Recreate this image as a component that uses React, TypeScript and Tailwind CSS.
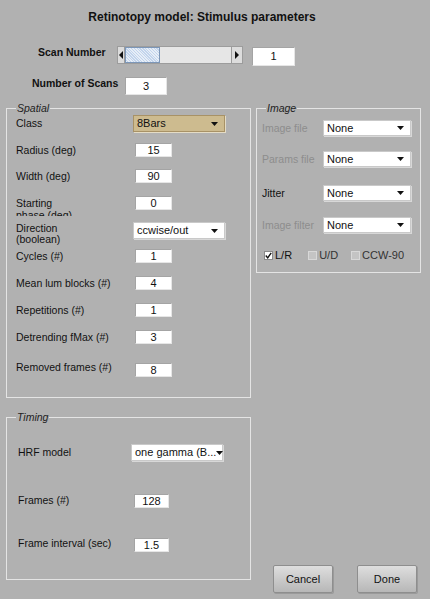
import React from "react";

const FONT = { fontFamily: '"Liberation Sans", Arial, sans-serif' };

function Tri() {
  return (
    <svg width="7" height="4" viewBox="0 0 7 4" className="shrink-0">
      <polygon points="0,0 7,0 3.5,4" fill="#111" />
    </svg>
  );
}

function Drop({ value, w, h = 17, tan = false, cls = "" }: { value: string; w: number; h?: number; tan?: boolean; cls?: string }) {
  return (
    <div
      className={
        "flex items-center justify-between pl-[3px] pr-[6px] text-[11px] text-[#111] border " +
        (tan
          ? "bg-[#cdbb8f] border-[#a89266] shadow-[1px_1px_0_#e4dcc6]"
          : "bg-white border-[#c9c9c9] shadow-[1px_1px_0_#d8d8d8]") +
        " " +
        cls
      }
      style={{ width: w, height: h }}
    >
      <span className="leading-none whitespace-nowrap">{value}</span>
      <Tri />
    </div>
  );
}

function Box({ value, w = 37, h = 14, cls = "" }: { value: string; w?: number; h?: number; cls?: string }) {
  return (
    <div
      className={"flex items-center justify-center bg-white border border-[#a4a4a4] border-r-[#e6e6e6] border-b-[#e6e6e6] text-[11px] text-[#111] leading-none " + cls}
      style={{ width: w, height: h }}
    >
      {value}
    </div>
  );
}

function Row({ label, children, mt }: { label: string; children: React.ReactNode; mt: number }) {
  return (
    <div className="flex items-center" style={{ marginTop: mt }}>
      <div className="w-[119px] text-[10.5px] text-[#111] leading-none whitespace-nowrap">{label}</div>
      {children}
    </div>
  );
}

function Legend({ text }: { text: string }) {
  return (
    <span className="absolute left-[9px] top-[-8px] px-[1px] bg-[#b1b1b1] italic text-[10.5px] text-[#222] leading-[14px]">
      {text}
    </span>
  );
}

function Check({ label, checked, gap }: { label: string; checked?: boolean; gap: number }) {
  return (
    <div className="flex items-center" style={{ marginLeft: gap }}>
      <div
        className={
          "w-[9px] h-[9px] border flex items-center justify-center " +
          (checked ? "bg-white border-[#8a8a8a]" : "bg-[#c4c4c4] border-[#d8d8d8]")
        }
      >
        {checked && (
          <svg width="9" height="9" viewBox="0 0 9 9">
            <path d="M1 4.5 L3.5 7.5 L8 1" stroke="#111" strokeWidth="1.8" fill="none" />
          </svg>
        )}
      </div>
      <span className={"ml-[2px] text-[11px] leading-none " + (checked ? "text-[#111]" : "text-[#333]")}>{label}</span>
    </div>
  );
}

function Button({ text }: { text: string }) {
  return (
    <div className="w-[60px] h-[28px] flex items-center justify-center text-[11px] text-[#111] border border-[#8e8e8e] rounded-[2px] bg-gradient-to-b from-[#dedede] to-[#b7b7b7] shadow-[1px_1px_0_#9a9a9a]">
      {text}
    </div>
  );
}

export default function App() {
  return (
    <div className="w-[430px] h-[599px] bg-[#b1b1b1] overflow-hidden relative" style={FONT}>
      <div className="h-[32px] flex items-center justify-center pt-[1px] pr-[26px]">
        <span className="font-bold text-[12px] text-[#111]">Retinotopy model: Stimulus parameters</span>
      </div>

      {/* Scan number row */}
      <div className="flex items-start mt-[14px]">
        <div className="w-[117px] pl-[38px] font-bold text-[10.5px] text-[#111] leading-none pt-[1px] whitespace-nowrap">Scan Number</div>
        <div className="flex h-[18px] w-[126px] border border-[#9c9c9c]">
          <div className="w-[7px] bg-[#dcdcdc] flex items-center justify-center border-r border-[#9c9c9c]">
            <svg width="4" height="8" viewBox="0 0 4 8"><polygon points="4,0 4,8 0,4" fill="#111" /></svg>
          </div>
          <div className="flex-1 bg-[#e6e6e6] flex">
            <div
              className="w-[35px] h-full border border-[#7d97b8] bg-[#c2d4ec]"
              style={{
                backgroundImage:
                  "repeating-linear-gradient(45deg, rgba(255,255,255,0.6) 0 1px, transparent 1px 2px)",
              }}
            />
          </div>
          <div className="w-[11px] bg-[#dcdcdc] flex items-center justify-center border-l border-[#9c9c9c]">
            <svg width="4" height="8" viewBox="0 0 4 8"><polygon points="0,0 0,8 4,4" fill="#111" /></svg>
          </div>
        </div>
        <Box value="1" w={43} h={19} cls="ml-[9px] mt-[1px]" />
      </div>

      {/* Number of scans */}
      <div className="flex items-start mt-[11px]">
        <div className="w-[125px] pl-[32px] font-bold text-[10.5px] text-[#111] leading-none pt-[1px] whitespace-nowrap">Number of Scans</div>
        <Box value="3" w={42} h={18} />
      </div>

      {/* panels */}
      <div className="flex mt-[13px] pl-[6px]">
        <div className="flex flex-col">
          {/* Spatial */}
          <div className="relative w-[245px] h-[290px] border border-[#e4e4e4] pl-[9px]">
            <Legend text="Spatial" />
            <Row label="Class" mt={6}>
              <Drop value="8Bars" w={92} tan cls="ml-[-2px]" />
            </Row>
            <Row label="Radius (deg)" mt={11}>
              <Box value="15" />
            </Row>
            <Row label="Width (deg)" mt={12}>
              <Box value="90" />
            </Row>
            <div className="flex items-start mt-[13px]">
              <div className="w-[119px] h-[20px] overflow-hidden text-[10.5px] text-[#111] leading-[12px] pt-[1px]">
                Starting
                <br />
                phase (deg)
              </div>
              <Box value="0" />
            </div>
            <div className="flex items-start mt-[6px]">
              <div className="w-[119px] text-[10.5px] text-[#111] leading-[11px] pt-[1px]">
                Direction
                <br />
                (boolean)
              </div>
              <Drop value="ccwise/out" w={92} cls="ml-[-2px]" />
            </div>
            <Row label="Cycles (#)" mt={4}>
              <Box value="1" />
            </Row>
            <Row label="Mean lum blocks (#)" mt={13}>
              <Box value="4" />
            </Row>
            <Row label="Repetitions (#)" mt={13}>
              <Box value="1" />
            </Row>
            <Row label="Detrending fMax (#)" mt={13}>
              <Box value="3" />
            </Row>
            <div className="flex items-start mt-[15px]">
              <div className="w-[119px] text-[10.5px] text-[#111] leading-none pt-[3px] whitespace-nowrap">Removed frames (#)</div>
              <Box value="8" cls="mt-[4px]" />
            </div>
          </div>

          {/* Timing */}
          <div className="relative w-[245px] h-[163px] mt-[19px] border border-[#e4e4e4] pl-[11px]">
            <Legend text="Timing" />
            <div className="flex items-center mt-[26px]">
              <div className="w-[113px] text-[10.5px] text-[#111] leading-none">HRF model</div>
              <Drop value="one gamma (B..." w={92} />
            </div>
            <div className="flex items-center mt-[33px]">
              <div className="w-[116px] text-[10.5px] text-[#111] leading-none mt-[-1px]">Frames (#)</div>
              <Box value="128" w={35} />
            </div>
            <div className="flex items-center mt-[30px]">
              <div className="w-[116px] text-[10.5px] text-[#111] leading-none mt-[-3px] whitespace-nowrap">Frame interval (sec)</div>
              <Box value="1.5" w={35} />
            </div>
          </div>
        </div>

        <div className="flex flex-col ml-[5px]">
          {/* Image */}
          <div className="relative w-[165px] h-[165px] border border-[#e4e4e4] pl-[5px]">
            <Legend text="Image" />
            <div className="flex items-center mt-[11px]">
              <div className="w-[61px] text-[10.5px] text-[#8d8d8d] leading-none whitespace-nowrap">Image file</div>
              <Drop value="None" w={88} h={16} />
            </div>
            <div className="flex items-center mt-[15px]">
              <div className="w-[61px] text-[10.5px] text-[#8d8d8d] leading-none whitespace-nowrap">Params file</div>
              <Drop value="None" w={88} h={16} />
            </div>
            <div className="flex items-center mt-[18px]">
              <div className="w-[61px] text-[10.5px] text-[#111] leading-none whitespace-nowrap">Jitter</div>
              <Drop value="None" w={88} h={16} />
            </div>
            <div className="flex items-center mt-[16px]">
              <div className="w-[61px] text-[10.5px] text-[#8d8d8d] leading-none whitespace-nowrap">Image filter</div>
              <Drop value="None" w={88} h={16} />
            </div>
            <div className="flex items-center mt-[17px]">
              <Check label="L/R" checked gap={2} />
              <Check label="U/D" gap={16} />
              <Check label="CCW-90" gap={13} />
            </div>
          </div>

          <div className="flex mt-[292px] pl-[17px] gap-[24px]">
            <Button text="Cancel" />
            <Button text="Done" />
          </div>
        </div>
      </div>
    </div>
  );
}
